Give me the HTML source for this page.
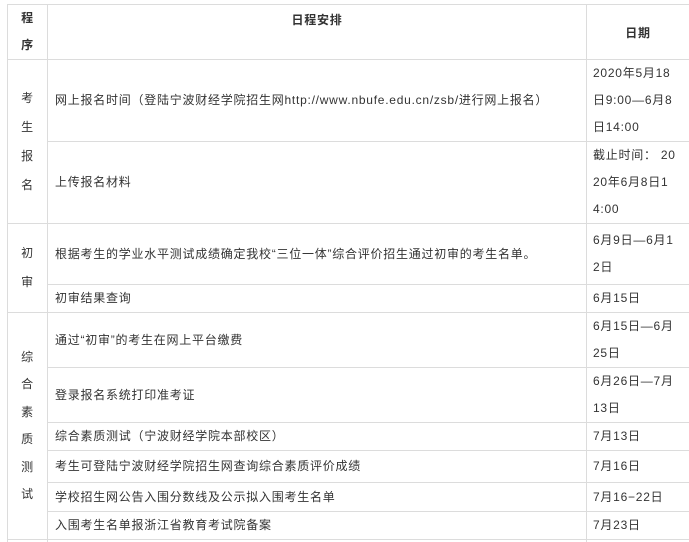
<!DOCTYPE html>
<html><head><meta charset="utf-8"><style>
body{margin:0;width:689px;height:542px;background:#fff;overflow:hidden;font-family:"Liberation Sans","Noto Sans CJK SC",sans-serif;font-size:12px;color:#333;position:relative;letter-spacing:0.75px}
.h{position:absolute;height:1px;background:#dcdcdc;right:0}
.v{position:absolute;width:1px;background:#dcdcdc;top:4px;bottom:0}
.c{position:absolute;display:flex;align-items:center;line-height:27px;white-space:nowrap}
.c1{left:8px;width:39px;justify-content:center;text-align:center;line-height:29px}
.c2{left:55px;width:525px}
.c3{left:593px;width:96px}
b{font-weight:bold}
</style></head><body>
<div class="h" style="top:4px;left:7px"></div>
<div class="h" style="top:59px;left:7px"></div>
<div class="h" style="top:141px;left:47px"></div>
<div class="h" style="top:223px;left:7px"></div>
<div class="h" style="top:284px;left:47px"></div>
<div class="h" style="top:312px;left:7px"></div>
<div class="h" style="top:367px;left:47px"></div>
<div class="h" style="top:422px;left:47px"></div>
<div class="h" style="top:450px;left:47px"></div>
<div class="h" style="top:482px;left:47px"></div>
<div class="h" style="top:511px;left:47px"></div>
<div class="h" style="top:539px;left:7px"></div>
<div class="v" style="left:7px"></div>
<div class="v" style="left:47px"></div>
<div class="v" style="left:586px"></div>

<div class="c c1" style="top:5px;height:54px;line-height:27px"><b>程<br>序</b></div>
<div class="c" style="left:48px;width:538px;top:7px;height:27px;justify-content:center"><b>日程安排</b></div>
<div class="c" style="left:587px;width:102px;top:6px;height:54px;justify-content:center"><b>日期</b></div>

<div class="c c1" style="top:60px;height:163px">考<br>生<br>报<br>名</div>
<div class="c c2" style="top:60px;height:81px">网上报名时间（登陆宁波财经学院招生网http://www.nbufe.edu.cn/zsb/进行网上报名）</div>
<div class="c c3" style="top:60px;height:81px">2020年5月18<br>日9:00—6月8<br>日14:00</div>
<div class="c c2" style="top:142px;height:81px">上传报名材料</div>
<div class="c c3" style="top:142px;height:81px">截止时间： 20<br>20年6月8日1<br>4:00</div>

<div class="c c1" style="top:224px;height:88px">初<br>审</div>
<div class="c c2" style="top:224px;height:60px">根据考生的学业水平测试成绩确定我校“三位一体”综合评价招生通过初审的考生名单。</div>
<div class="c c3" style="top:224px;height:60px">6月9日—6月1<br>2日</div>
<div class="c c2" style="top:285px;height:27px">初审结果查询</div>
<div class="c c3" style="top:285px;height:27px">6月15日</div>

<div class="c c1" style="top:313px;height:226px;line-height:27.5px">综<br>合<br>素<br>质<br>测<br>试</div>
<div class="c c2" style="top:313px;height:54px">通过“初审”的考生在网上平台缴费</div>
<div class="c c3" style="top:313px;height:54px">6月15日—6月<br>25日</div>
<div class="c c2" style="top:368px;height:54px">登录报名系统打印准考证</div>
<div class="c c3" style="top:368px;height:54px">6月26日—7月<br>13日</div>
<div class="c c2" style="top:423px;height:27px">综合素质测试（宁波财经学院本部校区）</div>
<div class="c c3" style="top:423px;height:27px">7月13日</div>
<div class="c c2" style="top:451px;height:31px">考生可登陆宁波财经学院招生网查询综合素质评价成绩</div>
<div class="c c3" style="top:451px;height:31px">7月16日</div>
<div class="c c2" style="top:483px;height:28px">学校招生网公告入围分数线及公示拟入围考生名单</div>
<div class="c c3" style="top:483px;height:28px">7月16−22日</div>
<div class="c c2" style="top:512px;height:27px">入围考生名单报浙江省教育考试院备案</div>
<div class="c c3" style="top:512px;height:27px">7月23日</div>
</body></html>
